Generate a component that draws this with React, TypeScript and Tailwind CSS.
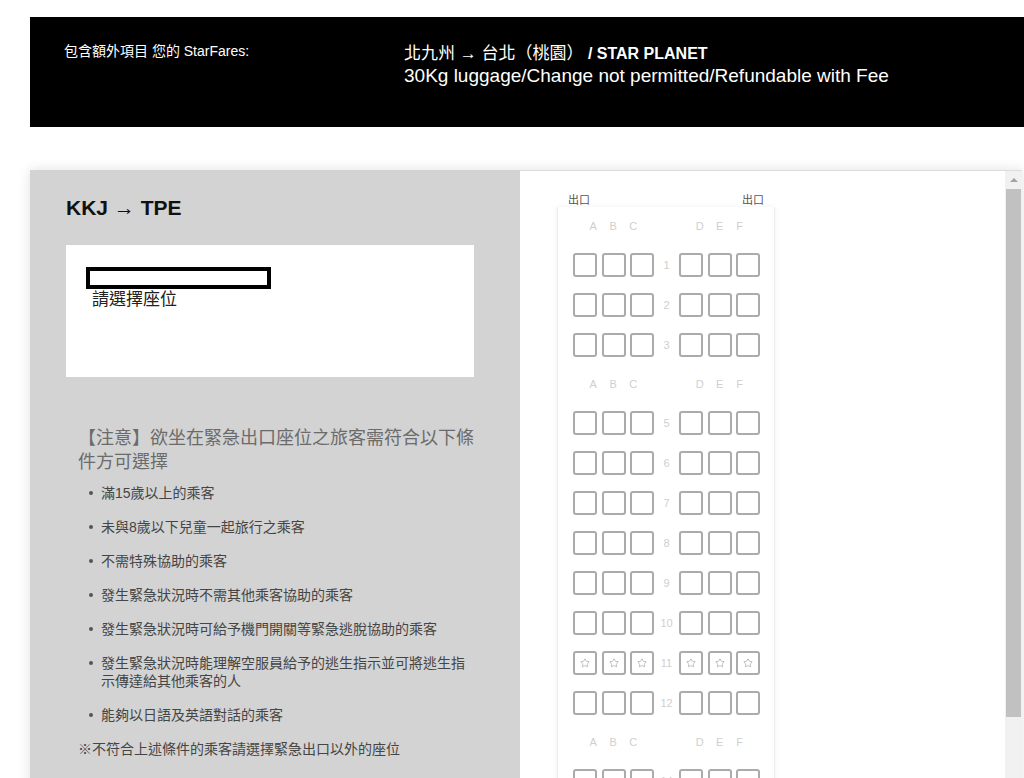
import { Star } from "lucide-react";

const FONT = {
  fontFamily: '"Liberation Sans", "Noto Sans CJK TC", sans-serif',
};

type Row = { kind: "seats"; num: number; exit?: boolean } | { kind: "letters" };

const rows: Row[] = [
  { kind: "letters" },
  { kind: "seats", num: 1 },
  { kind: "seats", num: 2 },
  { kind: "seats", num: 3 },
  { kind: "letters" },
  { kind: "seats", num: 5 },
  { kind: "seats", num: 6 },
  { kind: "seats", num: 7 },
  { kind: "seats", num: 8 },
  { kind: "seats", num: 9 },
  { kind: "seats", num: 10 },
  { kind: "seats", num: 11, exit: true },
  { kind: "seats", num: 12 },
  { kind: "letters" },
  { kind: "seats", num: 14 },
  { kind: "seats", num: 15 },
];

const rules = [
  "滿15歲以上的乘客",
  "未與8歲以下兒童一起旅行之乘客",
  "不需特殊協助的乘客",
  "發生緊急狀況時不需其他乘客協助的乘客",
  "發生緊急狀況時可給予機門開關等緊急逃脫協助的乘客",
  "發生緊急狀況時能理解空服員給予的逃生指示並可將逃生指示傳達給其他乘客的人",
  "能夠以日語及英語對話的乘客",
];

function Seat({ exit }: { exit?: boolean }) {
  return (
    <div className="w-[24px] h-[24px] border-2 border-[#ababab] rounded-[3px] bg-white flex items-center justify-center">
      {exit && <Star size={10} strokeWidth={1.5} className="text-[#9a9a9a]" />}
    </div>
  );
}

function Letters({ items }: { items: string[] }) {
  return (
    <div className="w-[81px] flex justify-center">
      {items.map((l) => (
        <span key={l} className="w-[20px] text-center">
          {l}
        </span>
      ))}
    </div>
  );
}

function SeatMap() {
  return (
    <div className="w-[218px]">
      <div className="flex justify-between px-[11px] h-[14px] text-[11px] leading-[14px] text-[#555]">
        <span>出口</span>
        <span>出口</span>
      </div>
      <div className="border-x border-[#ededed] shadow-[0_0_5px_rgba(0,0,0,0.06)] pt-[8px] pb-[20px] pl-[15px] pr-[14px] flex flex-col gap-[16px]">
        {rows.map((r, i) =>
          r.kind === "letters" ? (
            <div key={i} className="flex h-[22px] items-center text-[11px] text-[#cfcfcf]">
              <Letters items={["A", "B", "C"]} />
              <div className="w-[26px]" />
              <Letters items={["D", "E", "F"]} />
            </div>
          ) : (
            <div key={i} className="flex h-[24px] items-center">
              <div className="flex gap-[4.5px]">
                <Seat exit={r.exit} />
                <Seat exit={r.exit} />
                <Seat exit={r.exit} />
              </div>
              <div className="w-[26px] text-center text-[11px] text-[#cfcfcf]">{r.num}</div>
              <div className="flex gap-[4.5px]">
                <Seat exit={r.exit} />
                <Seat exit={r.exit} />
                <Seat exit={r.exit} />
              </div>
            </div>
          )
        )}
      </div>
    </div>
  );
}

export default function App() {
  return (
    <div className="w-[1024px] h-[778px] overflow-hidden bg-white" style={FONT}>
      {/* Fare banner */}
      <div className="mt-[17px] ml-[30px] w-[994px] h-[110px] bg-black text-white flex">
        <div className="w-[374px] pl-[34px] pt-[26px] text-[14px] leading-[16px]">
          包含額外項目 您的 StarFares:
        </div>
        <div className="pt-[26px]">
          <div className="text-[17px] leading-[21px]">
            北九州 → 台北（桃園）<span className="font-bold text-[16px]"> / STAR PLANET</span>
          </div>
          <div className="text-[19px] leading-[23px]">
            30Kg luggage/Change not permitted/Refundable with Fee
          </div>
        </div>
      </div>

      {/* Seat selection panel */}
      <div className="mt-[43px] ml-[30px] w-[992px] h-[700px] flex shadow-[0_0_12px_rgba(0,0,0,0.12)]">
        <div className="w-[490px] bg-[#d3d3d3] pt-[25px] pl-[36px]">
          <h2 className="text-[21px] leading-[25px] font-bold text-[#111]">KKJ → TPE</h2>
          <div className="mt-[25px] w-[408px] h-[132px] bg-white pt-[22px] pl-[20px]">
            <div className="w-[185px] h-[22px] border-4 border-black" />
            <div className="pl-[6px] text-[17px] leading-[22px] text-[#222]">請選擇座位</div>
          </div>

          <div className="mt-[49px] ml-[12px] w-[400px]">
            <p className="text-[18px] leading-[24px] text-[#6b6b6b]">
              【注意】欲坐在緊急出口座位之旅客需符合以下條件方可選擇
            </p>
            <ul className="mt-[10px] flex flex-col gap-[16px] text-[14px] leading-[18px] text-[#454545]">
              {rules.map((t) => (
                <li key={t} className="flex">
                  <span className="w-[23px] flex justify-end pr-[8px] pt-[7px] shrink-0">
                    <span className="w-[4px] h-[4px] rounded-full bg-[#555]" />
                  </span>
                  <span className="w-[385px]">{t}</span>
                </li>
              ))}
            </ul>
            <p className="mt-[16px] text-[14px] leading-[18px] text-[#454545]">
              ※不符合上述條件的乘客請選擇緊急出口以外的座位
            </p>
          </div>
        </div>

        <div className="flex-1 flex bg-white border-t border-[#dcdcdc]">
          <div className="flex-1 pl-[37px] pt-[22px]">
            <SeatMap />
          </div>
          <div className="w-[17px] bg-[#f1f1f1] flex flex-col">
            <div className="h-[18px] flex items-center justify-center">
              <div className="w-0 h-0 border-x-[4px] border-x-transparent border-b-[4px] border-b-[#a3a3a3]" />
            </div>
            <div className="mx-[1px] h-[528px] bg-[#c1c1c1]" />
          </div>
        </div>
      </div>
    </div>
  );
}
